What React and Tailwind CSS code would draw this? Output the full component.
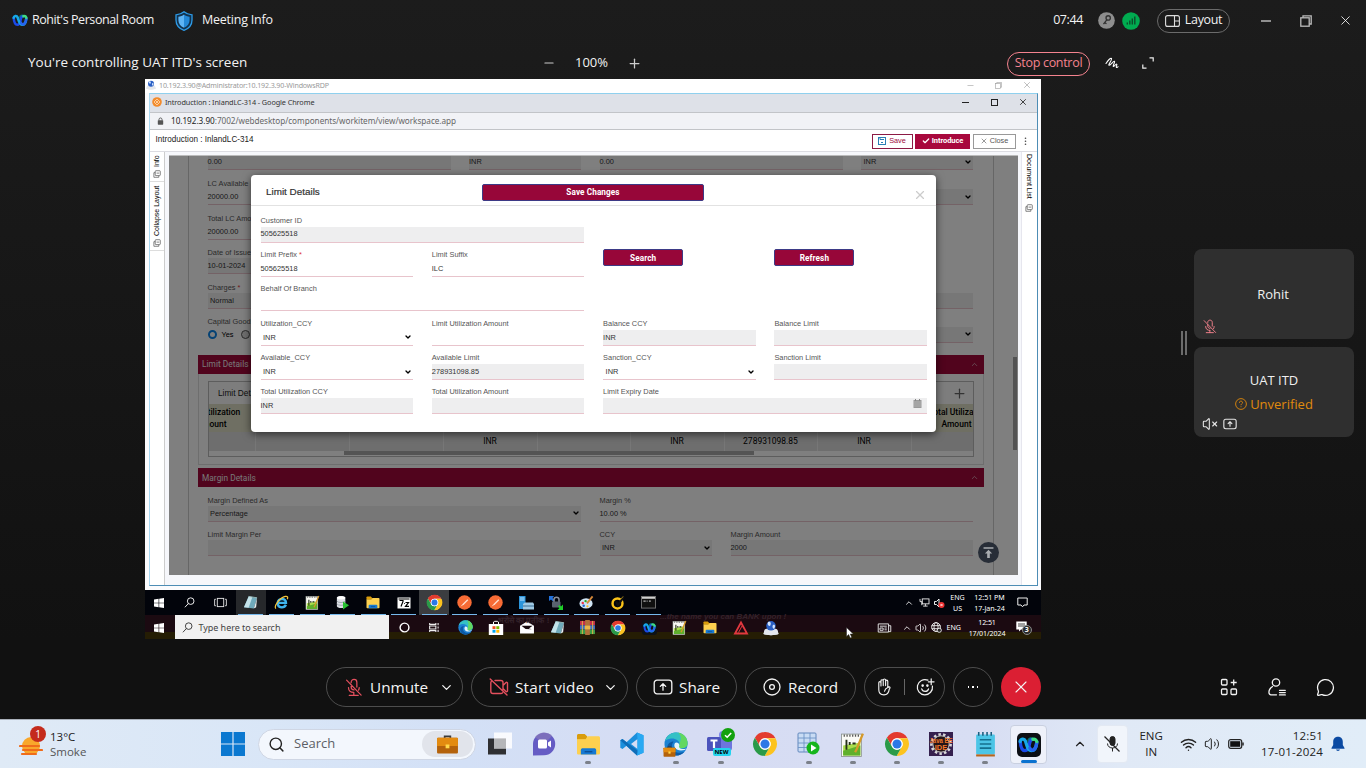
import React from "react";
import {
  Search, ChevronDown, ChevronUp, X, Minus, Plus, Check, VolumeX,
  MessageCircle, Wifi, Volume2,
} from "lucide-react";

/* ---------- logos ---------- */
const petal = "M21.7 6.8H12A5.2 5.2 0 0 0 7.5 14.6L2.65 6.2A11 11 0 0 1 21.7 6.8Z";
const ChromeLogo = ({ className }) => (
  <svg viewBox="0 0 24 24" className={className}>
    <circle cx="12" cy="12" r="10.5" fill="#fff" />
    <path d={petal} fill="#e33b2e" />
    <path d={petal} fill="#fcc31e" transform="rotate(120 12 12)" />
    <path d={petal} fill="#2a9a48" transform="rotate(240 12 12)" />
    <circle cx="12" cy="12" r="5.3" fill="#fff" />
    <circle cx="12" cy="12" r="4.2" fill="#2b78e6" />
  </svg>
);
const WebexMark = ({ className }) => (
  <svg viewBox="0 0 24 18" className={className} fill="none" strokeLinecap="round">
    <path d="M12.5 5.5C11 1 16 1 17.5 2.500" stroke="#0a7a6a" strokeWidth="3" />
    <path d="M2.500 4.500C3 12 5 15.500 8 15.500C11.500 15.500 13 9 13.500 6C14 3.500 15.500 2.500 17 2.500" stroke="#1b4bea" strokeWidth="3.800" />
    <path d="M2.500 5C3 2 7 1 8.500 4.500C10 9 11 15.500 15.500 15.500C19 15.500 21 11 21.500 6" stroke="#16a9e8" strokeWidth="3.800" />
    <path d="M13.500 12.500C17 18 21 13 21.500 5.500" stroke="#2563f0" strokeWidth="3.800" />
    <path d="M17 2.600C19 1.800 20.500 2.500 21.500 5" stroke="#3ddc84" strokeWidth="3.800" />
  </svg>
);
const WinLogo = ({ className }) => (
  <svg viewBox="0 0 10 10" className={className} fill="#fff">
    <path d="M0 1.500L4.600.8V4.700H0zM5.200.7L10 0V4.700H5.200zM0 5.300H4.600V9.200L0 8.500zM5.200 5.300H10V10L5.200 9.300z" />
  </svg>
);
const MagnifierLeft = ({ className }) => (
  <svg viewBox="0 0 12 12" className={className} fill="none" stroke="currentColor" strokeWidth="1">
    <circle cx="7.300" cy="4.500" r="3.600" /><path d="M4.800 7.100L1 11.200" />
  </svg>
);
const TaskView = ({ className }) => (
  <svg viewBox="0 0 14 12" className={className} fill="none" stroke="#e5e5e5" strokeWidth="1">
    <rect x="3.500" y="1.500" width="7" height="9" /><path d="M2 2.500H.6V9.500H2M12 2.500h1.400V9.500H12" />
  </svg>
);
const NotepadTilt = ({ className }) => (
  <svg viewBox="0 0 16 16" className={className}>
    <path d="M6 1.500L15 3L11.500 14.500L1 13Z" fill="#6fa9ba" /><path d="M6 1.500L10 2.200L6 13.700L1 13Z" fill="#c4e3ea" />
    <path d="M11.500 14.500L15 3L14 13Z" fill="#e8eef0" /><path d="M6 1.500L15 3" stroke="#9bb" />
  </svg>
);
const IeLogo = ({ className }) => (
  <svg viewBox="0 0 16 16" className={className} fill="none">
    <path d="M12.700 10.500C11 14.200 4 14.500 4 8.500C4 3 13 2.500 12.800 8.400H5" stroke="#3fb4ee" strokeWidth="2.600" />
    <path d="M2 14.500C-.5 12 6 3 12 1.500C14.500 1 15.200 2.500 14 4.500" stroke="#f5c53a" strokeWidth="1.300" />
  </svg>
);
const NotepadPlus = ({ className }) => (
  <svg viewBox="0 0 24 24" className={className}>
    <rect x="1.500" y="2" width="19" height="21.500" fill="#fafaf5" stroke="#8a928c" strokeWidth=".8" />
    <path d="M3 13L19.500 10V22.500H3Z" fill="#a9dc4c" /><path d="M3 18L19.500 13V22.500H3Z" fill="#5fb02c" />
    <path d="M3.500 3.500H18.500" stroke="#555" strokeDasharray="1.200 1.500" strokeWidth="2" />
    <path d="M6.200 7.500v9.500M9.300 9.500v3M12 11h3" stroke="#253018" strokeWidth="1.800" /><path d="M22 1.500L16 16.500l-1.500 3" stroke="#d69a2a" strokeWidth="2.200" fill="none" />
  </svg>
);
const DbPlay = ({ className }) => (
  <svg viewBox="0 0 16 16" className={className}>
    <path d="M2 3C2 .5 11 .5 11 3V12C11 14.500 2 14.500 2 12Z" fill="#dcdfe4" /><ellipse cx="6.500" cy="3" rx="4.500" ry="1.700" fill="#fff" />
    <path d="M2 6.500C3 8.500 10 8.500 11 6.500M2 9.500C3 11.500 10 11.500 11 9.500" stroke="#9aa1ab" fill="none" />
    <path d="M8.500 7L15 11L8.500 15.500Z" fill="#25c02f" />
  </svg>
);
const FolderIcon = ({ className }) => (
  <svg viewBox="0 0 24 24" className={className}>
    <path d="M0 2.500C0 1.700.7 1 1.500 1H8L10.500 3.500V7H0Z" fill="#d99c0c" />
    <path d="M0 6.500H9L11 3.500H22.500C23.300 3.500 24 4.200 24 5V21C24 21.800 23.300 22.500 22.500 22.500H1.500C.7 22.500 0 21.800 0 21Z" fill="#fdd04f" />
    <path d="M4 22.500V18C4 16.500 5 16 6 16H18C19 16 20 16.500 20 18V22.500Z" fill="#1679d3" /><path d="M8 19.500H16" stroke="#0b4f96" strokeWidth="1.500" />
  </svg>
);
const SevenZip = ({ className }) => (
  <svg viewBox="0 0 14 12" className={className}>
    <rect x=".5" y=".5" width="13" height="11" fill="#fff" /><path d="M2.500 3.500H6V4.500L4 9.500M7 6.500h.8M8.500 5.500H11.500L8.500 9.300H12M1.500 2H12.500" stroke="#000" strokeWidth="1.200" fill="none" />
  </svg>
);
const PostmanLogo = ({ className }) => (
  <svg viewBox="0 0 16 16" className={className}>
    <circle cx="8" cy="8" r="7.700" fill="#f76b35" /><path d="M3.500 12.500L6.500 9L11 4.500L12 5.500L7.500 10Z" fill="#ffe0d0" />
  </svg>
);
const ServerIcon = ({ className }) => (
  <svg viewBox="0 0 16 16" className={className}>
    <rect x="1" y="1" width="6.500" height="13" fill="#2c95db" /><path d="M2 3H6.500M2 5H6.500" stroke="#bfe4ff" />
    <path d="M5 9L7 7.500H15L16 9V14.500H5Z" fill="#9fc9e4" /><path d="M5 11H16" stroke="#3b6f94" />
  </svg>
);
const LockNet = ({ className }) => (
  <svg viewBox="0 0 16 16" className={className}>
    <path d="M1 1H6L4.500 3L6.500 5L5 6.500L3 4.500L1 6Z" fill="#2372dc" /><path d="M6 7V4.500C6 1.500 11 1.500 11 4.500V7" stroke="#8a8f99" strokeWidth="1.500" fill="none" />
    <rect x="4" y="6.500" width="8.500" height="6" rx="1" fill="#59636f" /><path d="M15 15H9.500L11.500 13L10 11.500L11.500 10L13 11.500L15 9.500Z" fill="#1fd02a" />
  </svg>
);
const PaletteIcon = ({ className }) => (
  <svg viewBox="0 0 16 16" className={className}>
    <ellipse cx="7.500" cy="9" rx="7" ry="5.500" fill="#cfe4f5" /><circle cx="4" cy="8.500" r="1.300" fill="#e34" /><circle cx="7" cy="6.500" r="1.300" fill="#2a2" />
    <circle cx="5" cy="11.500" r="1.300" fill="#26c" /><circle cx="9" cy="12" r="1.200" fill="#fb2" /><path d="M8.500 9L14.500 1.500" stroke="#d5893a" strokeWidth="2" />
  </svg>
);
const NortonRing = ({ className }) => (
  <svg viewBox="0 0 16 16" className={className} fill="none">
    <circle cx="8" cy="9" r="5.300" stroke="#fcc419" strokeWidth="2.600" /><path d="M6.500 7L8.500 11L14.500 2" stroke="#111" strokeWidth="2.400" /><path d="M11 5L14 1.500" stroke="#a8841a" />
  </svg>
);
const CmdIcon = ({ className }) => (
  <svg viewBox="0 0 16 14" className={className}>
    <rect x=".5" y=".5" width="15" height="12.500" fill="#101010" stroke="#777" /><path d="M1 2H15" stroke="#d0d0d0" strokeWidth="2" />
    <path d="M2.500 5.500H5M6 5.500h1M8.500 5.500h2" stroke="#eee" />
  </svg>
);
const EdgeLogo = ({ className }) => (
  <svg viewBox="0 0 24 24" className={className}>
    <circle cx="12" cy="12" r="11.500" fill="#1c82d3" />
    <path d="M1 9C3 2 9 .2 13 .5C20 1 24 6.500 23.500 12C23 16 18.500 17 15.500 16C14 15.500 15.500 14.500 15.500 12C15.500 8.500 11 6 7 6.500C4 7 2 8 1 9Z" fill="#35c1c5" />
    <path d="M14 .6C20 1.500 24 6.500 23.500 12C23 16 18.500 17 15.500 16C14 15.500 15.500 14.500 15.500 12C17 8 18 4 14 .6Z" fill="#62d860" />
    <path d="M8 12.500C7 18 12 22.500 20 20C16 25 8 24 5 20C1 14 5 9.500 9.500 9.500Z" fill="#0c59a4" />
    <path d="M11 11C9 14 11.500 18.500 17 18.500C20 18.500 21.500 17.500 22.500 16.500C18 18 14 16.500 15.300 13.500C15.500 11 12.500 9.500 11 11Z" fill="#e4f4fb" />
  </svg>
);
const StoreIcon = ({ className }) => (
  <svg viewBox="0 0 16 16" className={className}>
    <path d="M5.500 4V2C5.500 1 10.500 1 10.500 2V4" stroke="#fff" fill="none" /><path d="M.8 4H15.200V15H.8Z" fill="#fff" />
    <path d="M4.500 6.200H7.500V9H4.500Z" fill="#f25022" /><path d="M8.300 6.200H11.300V9H8.300Z" fill="#7fba00" /><path d="M4.500 9.800H7.500V12.700H4.500Z" fill="#00a4ef" /><path d="M8.300 9.800H11.300V12.700H8.300Z" fill="#ffb900" />
  </svg>
);
const MailIcon = ({ className }) => (
  <svg viewBox="0 0 16 14" className={className}>
    <path d="M.5 5L8 .5L15.500 5V13.500H.5Z" fill="#fff" /><path d="M2 5H14L10 8.200L13.500 9L6.500 8.500Z" fill="#180a0e" />
  </svg>
);
const BooksIcon = ({ className }) => (
  <svg viewBox="0 0 16 16" className={className}>
    <rect y="1" width="16" height="4.600" fill="#c22f4b" /><rect y="5.600" width="16" height="4.600" fill="#3d6fc4" /><rect y="10.200" width="16" height="4.800" fill="#3b9a45" />
    <path d="M5.500 0H10.500V16H5.500Z" fill="#b0713a" /><rect x="5" y="6" width="6" height="4" fill="#e8b648" /><path d="M2.500 1V15M13.500 1V15" stroke="#e8b648" />
  </svg>
);
const TriangleLogo = ({ className }) => (
  <svg viewBox="0 0 16 16" className={className} fill="none" stroke="#e2383f">
    <path d="M8 2.500L14 13.500H2Z" strokeWidth="1.800" /><path d="M5.500 12.500L9 6" strokeWidth="1" />
  </svg>
);
const RemoteGlobe = ({ className }) => (
  <svg viewBox="0 0 16 16" className={className}>
    <path d="M1.500 10C1.500 7.500 14.500 7.500 14.500 10L15.500 14C12 15.500 4 15.500 .5 14Z" fill="#e4e7ec" /><circle cx="8" cy="5.800" r="4.800" fill="#2a5fc4" /><path d="M5 2C8 1 8.500 4 7 6C5 6 4 4 5 2ZM10 5C12.500 4 12.500 7 11 9C9.500 8 9 6.500 10 5Z" fill="#cfe3ff" />
    <path d="M1.500 10.500C4 12.500 12 12.500 14.500 10.500L15.500 14C12 15.500 4 15.500 .5 14Z" fill="#e4e7ec" />
  </svg>
);
const VsCode = ({ className }) => (
  <svg viewBox="0 0 24 24" className={className}>
    <path d="M17 .5L23.500 3.300V20.700L17 23.500L6.500 13.700L2.500 17L.3 15.800V8.200L2.500 7L6.500 10.200ZM17.500 7L11 12L17.500 17Z" fill="#1c8fdc" fillRule="evenodd" />
    <path d="M17 .5L23.500 3.300V20.700L17 23.500L17.500 17V7Z" fill="#29a9f3" /><path d="M.3 8.200L2.500 7L17.500 18.500L17 23.500Z" fill="#0f6db8" />
  </svg>
);
const Briefcase = ({ className }) => (
  <svg viewBox="0 0 24 20" className={className}>
    <path d="M9 3.500V1.500H15V3.500" stroke="#3a3a3a" strokeWidth="1.800" fill="none" /><rect x="1" y="3" width="22" height="16.500" rx="1.200" fill="#b4620b" />
    <path d="M1 4.200C1 3.500 1.500 3 2.200 3H21.800C22.500 3 23 3.500 23 4.200V11.500H1Z" fill="#e38b10" /><rect x="10" y="10" width="4" height="4" fill="#ffd84a" />
  </svg>
);
const StackWindows = ({ className }) => (
  <svg viewBox="0 0 24 24" className={className}>
    <rect x="0" y="6.500" width="18" height="16" fill="#2f3033" /><rect x="6" y=".5" width="18" height="16" fill="#fff" fillOpacity=".85" /><rect x="6" y="6.500" width="12" height="10" fill="#b5b6b9" />
  </svg>
);
const ChatVideo = ({ className }) => (
  <svg viewBox="0 0 24 24" className={className}>
    <path d="M12 .8A11.200 11.200 0 1 1 12 23.200L1 23.500V12A11.200 11.200 0 0 1 12 .8Z" fill="#655cc4" /><path d="M3 5A11.200 11.200 0 0 1 20 4L12 12Z" fill="#8c7bb8" fillOpacity=".6" />
    <rect x="6" y="7.500" width="9" height="9" rx="1.500" fill="#fff" /><path d="M16 10.500L19 8.500V15.500L16 13.500Z" fill="#fff" />
  </svg>
);
const TeamsIcon = ({ className }) => (
  <svg viewBox="0 0 28 28" className={className}>
    <circle cx="16" cy="7" r="4" fill="#7b83eb" /><path d="M11 10H25V20C25 24 19 25 16 24L11 20Z" fill="#6e76dd" />
    <rect x="0" y="9" width="14" height="14" rx="1.500" fill="#4b53bc" /><path d="M3.500 12.500H10.500M7 12.500V20" stroke="#fff" strokeWidth="2.200" />
    <circle cx="21" cy="7" r="7" fill="#13a10e" /><path d="M18 7.200L20.200 9.300L24.200 5" stroke="#fff" strokeWidth="1.500" fill="none" />
  </svg>
);
const DbTable = ({ className }) => (
  <svg viewBox="0 0 24 24" className={className}>
    <rect x="1" y="1" width="18" height="19" rx="1" fill="#c9dcf4" stroke="#6288bd" /><path d="M1 6H19M1 11H19M1 15.500H19M7 1V20M13 1V20" stroke="#6d93c6" strokeWidth=".9" />
    <circle cx="16" cy="16" r="6.500" fill="#16b51c" /><path d="M14 12.500L19.500 16L14 19.500Z" fill="#fff" />
  </svg>
);
const JavaEE = ({ className }) => (
  <svg viewBox="0 0 24 24" className={className}>
    <rect width="24" height="24" fill="#35204e" /><circle cx="12" cy="12" r="9.600" fill="none" stroke="#d8d8d8" strokeWidth="2.600" strokeDasharray="2.500 2.200" /><circle cx="12" cy="12" r="8.200" fill="#241618" stroke="#c4c4c4" />
    <text x="12" y="11" textAnchor="middle" fontSize="7" fontWeight="bold" fontFamily="Liberation Sans" fill="#f2762a" textLength="23" lengthAdjust="spacingAndGlyphs">Java EE</text>
    <text x="12" y="18" textAnchor="middle" fontSize="7.500" fontWeight="bold" fontFamily="Liberation Sans" fill="#f2762a">IDE</text>
  </svg>
);
const NotepadBlue = ({ className }) => (
  <svg viewBox="0 0 24 24" className={className}>
    <rect x="3" y="2.500" width="18" height="19" rx="1" fill="#4cc5e6" /><path d="M3 22.500H21" stroke="#b8651b" strokeWidth="2" />
    <path d="M5.500 0V3.500M9.500 0V3.500M13.500 0V3.500M17.500 0V3.500" stroke="#1b5f80" strokeWidth="1.500" /><path d="M6.500 7.500H17.500M6.500 11.500H17.500M6.500 15.500H17.500" stroke="#14708f" strokeWidth="1.500" />
  </svg>
);
const ShareBox = ({ className, sw = 1.5 }) => (
  <svg viewBox="0 0 20 16" className={className} fill="none" stroke="currentColor" strokeWidth={sw} strokeLinecap="round" strokeLinejoin="round">
    <rect x="1.200" y="1.200" width="17.600" height="13.600" rx="2.800" /><path d="M10 11.200V5M7.300 7.400L10 4.800L12.700 7.400" />
  </svg>
);
const MicMuted = ({ className, sw = 1.3 }) => (
  <svg viewBox="0 0 18 20" className={className} fill="none" stroke="currentColor" strokeWidth={sw} strokeLinecap="round">
    <path d="M6 5V4.500C6 .5 12 .5 12 4.500V9.500M6 7V9.500C6 11 7 12.500 9 12.500M3.200 10C3.200 13.500 5.500 15.200 8.800 15.200M14.500 10C14.500 11 14.300 12 13.800 12.800M8.800 15.200V18.200M4 18.200H13.500M1.200 2.200L16.500 18" />
  </svg>
);
const CamMuted = ({ className }) => (
  <svg viewBox="0 0 20 18" className={className} fill="none" stroke="currentColor" strokeWidth="1.400" strokeLinecap="round" strokeLinejoin="round">
    <path d="M6 2.500H11.800C13 2.500 14 3.500 14 4.500V11.500M2.800 3C2 3.500 1.800 4 1.800 4.800V13.200C1.800 14.500 2.800 15.500 4 15.500H11.800C12.500 15.500 13.200 15.200 13.500 14.800M14 7.500L17 4.500C17.500 4 18.500 4.300 18.500 5V13C18.500 13.700 17.500 14 17 13.500L14 10.500M1.200 1L18 17" />
  </svg>
);
const SheetIcon = ({ className }) => (
  <svg viewBox="0 0 9 9" className={className} fill="none" stroke="#555" strokeWidth=".8">
    <rect x="2.500" y=".8" width="5.700" height="5.500" rx=".8" /><path d="M2.500 3H1V8.200H6.500V6.500M4 3.500H7" />
  </svg>
);
const RestoreIcon = ({ className, sw = 1 }) => (
  <svg viewBox="0 0 12 12" className={className} fill="none" stroke="currentColor" strokeWidth={sw}>
    <rect x=".8" y="2.800" width="8.400" height="8.400" /><path d="M3 2.800V.8H11.200V9H9.200" />
  </svg>
);

/* ---------- meeting header ---------- */
function TopBar() {
  return (
    <header className="flex h-[40px] items-center pl-[12px] pr-[13px] pt-px text-[12.500px] font-medium text-[#f2f2f2]">
      <WebexMark className="h-[13px] w-[16px]" />
      <span className="ml-[4px] w-[143px] tracking-[-0.430px]">Rohit's Personal Room</span>
      <svg viewBox="0 0 18 20" className="h-[20px] w-[18px]">
        <path d="M9 .8C11.500 3 14 3.600 17 3.800V9C17 14.500 13.500 17.700 9 19.300C4.500 17.700 1 14.500 1 9V3.800C4 3.600 6.500 3 9 .8Z" fill="#12324d" stroke="#2d9be8" strokeWidth="1.300" />
        <path d="M9 3.500V16.700C5.500 15.300 3.400 12.800 3.400 9V5.700C5.500 5.500 7.300 4.900 9 3.500Z" fill="#5db4f5" /><path d="M9 3.500V16.700C12.500 15.300 14.600 12.800 14.600 9V5.700C12.500 5.500 10.700 4.900 9 3.500Z" fill="#2489d8" />
      </svg>
      <span className="ml-[9px] tracking-[-0.220px]">Meeting Info</span>
      <div className="ml-auto flex items-center">
        <span className="mr-[15px] tracking-[-0.400px]">07:44</span>
        <svg viewBox="0 0 18 18" className="mr-[7px] size-[17px]"><circle cx="9" cy="9" r="8.800" fill="#8e8e8e" /><circle cx="10.800" cy="6.300" r="2.300" fill="none" stroke="#333" strokeWidth="1.400" /><path d="M9.500 8L5.800 12.800M7 11.300L9 12.500" stroke="#333" strokeWidth="1.400" /></svg>
        <svg viewBox="0 0 18 18" className="mr-[17px] size-[18px]"><circle cx="9" cy="9" r="8.800" fill="#00ab50" /><path d="M5.300 12.500V10.500M7.800 12.500V8.500M10.300 12.500V6.500M12.800 12.500V4.500" stroke="#0b4d2a" strokeWidth="1.400" /></svg>
        <button className="flex h-[24px] w-[73px] items-center justify-center gap-[5px] rounded-full border border-[#6b6b6b] tracking-[-0.350px]">
          <svg viewBox="0 0 15 12" className="h-[12px] w-[15px]" fill="none" stroke="#ddd" strokeWidth="1.100"><rect x=".6" y=".6" width="13.800" height="10.800" rx="2" /><path d="M9.500 .6V11.400M9.500 6H14.400" /></svg>
          Layout
        </button>
        <span className="ml-[31px] mr-[29px] h-[2px] w-[10px] bg-[#8f8f8f]" />
        <RestoreIcon className="size-[12px] text-[#bbb]" sw={1.300} />
        <X className="ml-[26px] size-[15px] text-white" strokeWidth={1.300} />
      </div>
    </header>
  );
}
function ControlStrip() {
  return (
    <div className="flex h-[39px] items-center pl-[28px] pt-[7px] font-medium text-[#f2f2f2]">
      <span className="w-[514px] pb-[2px] text-[13.500px]">You're controlling UAT ITD's screen</span>
      <Minus className="size-[14px] text-[#ccc]" strokeWidth={2} />
      <span className="w-[71px] text-center text-[13px]">100%</span>
      <Plus className="size-[15px] text-[#ccc]" strokeWidth={2} />
      <button className="ml-[365px] mt-px h-[24px] w-[83px] rounded-full border border-[#f5838f] pb-px text-[12.500px] tracking-[-0.300px] text-[#f5838f]">Stop control</button>
      <svg viewBox="0 0 14 12" className="ml-[15px] h-[12px] w-[14px]" fill="none" stroke="#fff" strokeWidth="1.100" strokeLinecap="round" strokeLinejoin="round"><path d="M1 6.500C3 3.500 5.500 1 6.500 1.500C7.500 2.300 3 8 4 8.300C5.200 8.600 8.500 3.500 9.500 4.300C10.300 5 7.500 9 8.300 9.500C9 10 11 6.500 11.800 7.300C12.300 8 10.500 10 11.500 10.500C12 10.700 12.800 10 13 9.700" /></svg>
      <svg viewBox="0 0 12 12" className="ml-[23px] size-[12px]" fill="none" stroke="#eee" strokeWidth="1.200"><path d="M7.500 .8H11.200V4.500M4.500 11.200H.8V7.500" /></svg>
    </div>
  );
}

/* ---------- form pieces ---------- */
const tones = { grey: "bg-[#eeeeef]", plain: "bg-transparent" };
function Field({ label, value, star, select, tone = "grey", className = "", children }) {
  return (
    <div className={`h-[34.4px] ${className}`}>
      <div className="field-label h-[12px] pt-[2px] leading-[9px] text-[#555]">
        {label}{star && <span className="text-[#d33]"> *</span>}
      </div>
      <div className={`flex h-[16px] items-center justify-between border-b border-[#e8c4cc] text-[#333] ${tones[tone]} ${select ? "pl-[2.500px]" : ""}`}>
        <span>{value}</span>
        {select && <ChevronDown className="mr-[1px] size-[8px] text-black" strokeWidth={4} />}
        {children}
      </div>
    </div>
  );
}
function SectionBar({ title }) {
  return (
    <div className="mx-[9px] flex h-[19px] items-center justify-between bg-[#a3083b] px-[4px] font-['Roboto'] text-[8.300px] tracking-[0.050px] text-[#eee]">
      {title}
      <ChevronUp className="mr-[1px] size-[9px]" strokeWidth={1.500} />
    </div>
  );
}
const cell = "flex h-full items-center justify-center border-r border-[#eee] pb-[2px]";
function BackgroundForm() {
  return (
    <div className="ml-[19.500px] flow-root h-full w-[805.500px] border-x border-[#ccc] text-[7.400px]">
      <div className="-mt-[14px] grid grid-cols-[243px_112px_243px_112px] gap-x-[18.500px] px-[18.500px]">
        <Field label="" value="0.00" /><Field label="" value="INR" /><Field label="" value="0.00" /><Field label="" value="INR" select />
      </div>
      <div className="mt-[1px] grid grid-cols-[373px_373px] gap-x-[19px] px-[18.500px]">
        <Field label="LC Available" value="20000.00" tone="plain" /><Field label="" value="" select />
      </div>
      <div className="px-[18.500px]"><Field label="Total LC Amount" value="20000.00" tone="plain" className="w-[373px]" /></div>
      <div className="px-[18.500px]"><Field label="Date of Issue" value="10-01-2024" className="w-[373px]" /></div>
      <div className="grid grid-cols-[373px_373px] gap-x-[19px] px-[18.500px]">
        <Field label="Charges" star value="Normal" select /><Field label="" value="" />
      </div>
      <div className="grid h-[40px] grid-cols-[373px_373px] gap-x-[19px] px-[18.500px]">
        <div className="pt-[2px] leading-[9px] text-[#555]">
          Capital Goods
          <div className="mt-[3px] flex h-[12px] items-center">
            <i className="size-[9px] rounded-full border-[2.500px] border-[#0a84e8] bg-white" />
            <span className="ml-[5px] mr-[7px] text-black">Yes</span>
            <i className="size-[9px] rounded-full border border-[#555] bg-[#ddd]" />
          </div>
        </div>
        <Field label="" value="" select />
      </div>
      <SectionBar title="Limit Details" />
      <div className="mx-[9px] h-[91px] border border-t-0 border-[#ddd] px-[9px] pt-[7px]">
        <div className="h-[76px] overflow-hidden border border-[#bbb]">
          <div className="flex h-[22.500px] items-center justify-between bg-[#fbfbfb] pl-[9px] pr-[6px] text-[8.300px] text-[#222]">
            Limit Details <Plus className="size-[15px] text-[#666]" strokeWidth={2} />
          </div>
          <div className="flex h-[28px] items-center justify-between bg-[#dedec6] pb-px font-['Roboto'] text-[8.500px] font-medium leading-[12px] text-black">
            <div className="-ml-[7px]">Utilization<br />mount</div>
            <div className="-mr-[6px] text-right">Total Utilizati<br /><span className="mr-[7px]">Amount</span></div>
          </div>
          <div className="grid h-[19px] grid-cols-[47px_94px_93.500px_94px_93px_94px_93px_94px_63px] items-center bg-[#ddd] text-center font-['Roboto'] text-[8.500px] text-black">
            <span className={cell} /><span className={cell} /><span className={cell} />
            <span className={cell}>INR</span><span className={cell} />
            <span className={cell}>INR</span><span className={cell}>278931098.85</span><span className={cell}>INR</span><span />
          </div>
          <div className="h-[5px] bg-white"><div className="ml-[134.500px] h-[4px] w-[410px] bg-[#a8a8a8]" /></div>
        </div>
      </div>
      <div className="h-[3.500px]" />
      <SectionBar title="Margin Details" />
      <div className="mt-[6.500px] grid grid-cols-[373px_373px] gap-x-[19px] px-[18.500px]">
        <Field label="Margin Defined As" value="Percentage" select /><Field label="Margin %" value="10.00 %" tone="plain" />
      </div>
      <div className="grid grid-cols-[373px_112px_242px] gap-x-[19px] px-[18.500px]">
        <Field label="Limit Margin Per" value="" /><Field label="CCY" value="INR" select /><Field label="Margin Amount" value="2000" />
      </div>
    </div>
  );
}
const ModalButton = ({ children, className }) => (
  <button className={`h-[16.500px] rounded-[2px] border border-[#3d3a86] bg-[#970639] font-['Roboto'] text-[8.200px] font-bold leading-none tracking-[0.100px] text-white ${className}`}>{children}</button>
);
function LimitModal() {
  return (
    <div className="absolute left-[82.500px] top-[18.500px] h-[257px] w-[685px] rounded-[4px] bg-white text-[7.400px] shadow-[0_2px_8px_rgba(0,0,0,0.600)]">
      <div className="flex h-[31px] items-start border-b border-[#e2e2e2] pl-[15px] pr-[9px]">
        <h2 className="w-[216px] pt-[12px] text-[9.900px] leading-none text-[#333] [-webkit-text-stroke:0.200px_#333]">Limit Details</h2>
        <ModalButton className="mt-[9.500px] w-[222px]">Save Changes</ModalButton>
        <X className="ml-auto mt-[13px] size-[14px] text-[#ccc]" strokeWidth={2} />
      </div>
      <div className="grid grid-cols-[152.500px_152.500px_152.500px_152.500px] gap-x-[18.800px] pl-[9.500px] pt-[9px] [&_.field-label]:pt-[1px]">
        <Field label="Customer ID" value="505625518" className="col-span-2" /><span className="col-span-2" />
        <Field label="Limit Prefix" star value="505625518" tone="plain" /><Field label="Limit Suffix" value="ILC" tone="plain" />
        <ModalButton className="mt-[0.500px] w-[80px]">Search</ModalButton><ModalButton className="mt-[0.500px] w-[80px]">Refresh</ModalButton>
        <Field label="Behalf Of Branch" value="" tone="plain" className="col-span-2" /><span className="col-span-2" />
        <Field label="Utilization_CCY" value="INR" select tone="plain" /><Field label="Limit Utilization Amount" value="" tone="plain" /><Field label="Balance CCY" value="INR" /><Field label="Balance Limit" value="" />
        <Field label="Available_CCY" value="INR" select tone="plain" /><Field label="Available Limit" value="278931098.85" /><Field label="Sanction_CCY" value="INR" select tone="plain" /><Field label="Sanction Limit" value="" />
        <Field label="Total Utilization CCY" value="INR" /><Field label="Total Utilization Amount" value="" />
        <Field label="Limit Expiry Date" value="" className="col-span-2">
          <svg viewBox="0 0 9 9" className="mb-[4px] mr-[5px] size-[9px]"><path d="M.5 1H8.500V9H.5Z" fill="#9a9a9a" /><path d="M.5 3H8.500M.5 5H8.500M.5 7H8.500" stroke="#c4c4c4" strokeWidth=".5" /><path d="M2.500 0V2M6.500 0V2" stroke="#888" /></svg>
        </Field>
      </div>
    </div>
  );
}

/* ---------- remote desktop ---------- */
const remoteTop = [
  [WinLogo, "size-[10px]", ""], [MagnifierLeft, "size-[11px] text-white", ""], [TaskView, "h-[11px] w-[13px]", ""],
  [NotepadTilt, "size-[15px]", "bg-[#26282b]", 1], [IeLogo, "size-[15px]", "", 1], [NotepadPlus, "size-[15px]", "", 1], [DbPlay, "size-[15px]", "", 1],
  [FolderIcon, "h-[13px] w-[14px]", "", 1], [SevenZip, "h-[12px] w-[14px]", "", 1], [ChromeLogo, "size-[17px]", "bg-[#3b3d40]", 1],
  [PostmanLogo, "size-[15px]", "", 1], [PostmanLogo, "size-[15px]", "", 1], [ServerIcon, "size-[16px]", "", 1], [LockNet, "size-[16px]", "", 1],
  [PaletteIcon, "size-[15px]", "", 1], [NortonRing, "size-[15px]", "", 1], [CmdIcon, "h-[13px] w-[15px]", "", 1],
];
const Cortana = ({ className }) => <svg viewBox="0 0 10 10" className={className} fill="none" stroke="#fff" strokeWidth="1.300"><circle cx="5" cy="5" r="4" /></svg>;
const TimelineIcon = ({ className }) => <svg viewBox="0 0 12 10" className={className} fill="none" stroke="#eee" strokeWidth="1.200"><path d="M.6 0V1.500H7.500V0M.6 10V8.500H7.500V10M.6 3.300H7.500V6.700H.6ZM10 0V2.500M10 4V6M10 7.500V10" /></svg>;
const WebexSmall = ({ className }) => <span className={`flex items-center justify-center rounded-[3px] bg-[#0e1216] ${className}`}><WebexMark className="h-[10px] w-[13px]" /></span>;
const remoteBottom = [
  [Cortana, "size-[11px]"], [TimelineIcon, "h-[9px] w-[11px]"], [EdgeLogo, "size-[15px]"], [StoreIcon, "size-[16px]"], [MailIcon, "h-[13px] w-[16px]"], [NotepadTilt, "size-[15px]"],
  [BooksIcon, "size-[15px]"], [ChromeLogo, "size-[16px]"], [WebexSmall, "size-[15px]"], [NotepadPlus, "size-[15px]"], [FolderIcon, "h-[13px] w-[14px]"], [TriangleLogo, "size-[16px]"], [RemoteGlobe, "size-[16px]"],
];
function RemoteTaskbars() {
  return (
    <>
      <div className="flex h-[25px] bg-[#02040b] pr-[13px] text-[#eee]">
        {remoteTop.map(([Icon, cls, bg, open], i) => (
          <div key={i} className={`flex h-[25px] w-[30.550px] shrink-0 flex-col items-center ${i === 0 ? "-ml-px" : ""} ${bg}`}>
            <div className="flex h-[24px] items-center pt-px"><Icon className={cls} /></div>
            {open && <div className="h-[1px] w-[25px] bg-[#76b9ed]" />}
          </div>
        ))}
        <div className="ml-auto flex items-center font-['Noto_Sans'] text-[7.100px] leading-[10.500px] text-white">
          <ChevronUp className="size-[10px]" strokeWidth={2} />
          <svg viewBox="0 0 11 10" className="ml-[5px] h-[9px] w-[11px]" fill="none" stroke="#eee"><rect x="3" y="1" width="7.500" height="5.500" /><path d="M6.500 6.500V9M4 9H9M.5 1V4H2.500V8" /></svg>
          <svg viewBox="0 0 11 10" className="ml-[4px] h-[10px] w-[11px]"><path d="M.5 3.500H2.500L5 1V9L2.500 6.500H.5Z" fill="none" stroke="#eee" /><circle cx="7.500" cy="7" r="3" fill="#e33" /><path d="M6.500 6L8.500 8M8.500 6L6.500 8" stroke="#fff" strokeWidth=".8" /></svg>
          <div className="ml-[4px] w-[17px] text-center">ENG<br />US</div>
          <div className="ml-[6px] w-[35px] text-center tracking-[-0.050px]">12:51 PM<br />17-Jan-24</div>
          <svg viewBox="0 0 11 11" className="ml-[10px] size-[11px]" fill="none" stroke="#eee"><path d="M.8 1H10.200V8H7L5.500 9.800L4 8H.8Z" /></svg>
        </div>
      </div>
      <div className="relative flex h-[25px] bg-[linear-gradient(#1b0a11_0_17px,#251d04_17px)] pr-[8px] text-[#eee]">
        <span className="absolute left-[353px] top-[0px] text-[8px] font-bold text-[#33222a]">भरोसे का प्रतीक !</span>
        <span className="absolute left-[515px] top-[-4px] whitespace-nowrap text-[8px] font-bold italic text-[#35232b]">...the name you can BANK upon !</span>
        <div className="flex w-[29.500px] items-center justify-center pr-px pt-px"><WinLogo className="size-[10px]" /></div>
        <div className="flex h-[24px] w-[214.500px] items-center bg-[#f1f1f1] pl-[7px] pt-px font-['Noto_Sans'] text-[9px] tracking-[-0.050px] text-[#444]">
          <MagnifierLeft className="mr-[6px] size-[11px] text-[#333]" />Type here to search
        </div>
        {remoteBottom.map(([Icon, cls], i) => (
          <div key={i} className="flex h-[25px] w-[30.600px] shrink-0 items-center justify-center"><Icon className={cls} /></div>
        ))}
        <div className="ml-auto flex items-center font-['Noto_Sans'] text-[7.100px] leading-[10.500px] text-white">
          <svg viewBox="0 0 15 11" className="h-[10px] w-[15px]" fill="none" stroke="#eee"><path d="M.6 1H12V10H.6ZM12 3H14.400V9.500H12M2.500 3.500H10M2.500 5.500H6V8H2.500ZM7.500 5.500H10M7.500 7.500H10" /></svg>
          <ChevronUp className="ml-[10px] size-[10px]" strokeWidth={2} />
          <Volume2 className="ml-[3px] size-[12px]" strokeWidth={1.600} />
          <svg viewBox="0 0 12 12" className="ml-[4px] size-[11px]" fill="none" stroke="#eee"><circle cx="5.500" cy="5.500" r="4.800" /><ellipse cx="5.500" cy="5.500" rx="2.200" ry="4.800" /><path d="M.7 4H10.300M.7 7.300H10.300" /><circle cx="9" cy="9" r="2.300" fill="#222" /></svg>
          <span className="ml-[5px]">ENG</span>
          <div className="ml-[7px] w-[38px] text-center tracking-[-0.100px]">12:51<br />17/01/2024</div>
          <span className="relative ml-[10px] block h-[13px] w-[17px]">
            <svg viewBox="0 0 11 11" className="size-[11px]"><path d="M.3 .5H10.700V8.500H5L3 10.500V8.500H.3Z" fill="#fff" /><path d="M2 3H9M2 5H9" stroke="#444" /></svg>
            <b className="absolute left-[6px] top-[4px] flex size-[9.500px] items-center justify-center rounded-full border border-[#888] bg-[#2b2b2b] text-[7px]">3</b>
          </span>
        </div>
        <svg viewBox="0 0 8 12" className="absolute left-[701px] top-[12px] h-[12px] w-[8px]"><path d="M.5 .5V9.500L2.700 7.500L4.200 11L5.700 10.300L4.300 7H7.300Z" fill="#fff" stroke="#222" strokeWidth=".5" /></svg>
      </div>
    </>
  );
}
function RemoteScreen() {
  return (
    <main className="flex h-[560px] w-[896px] flex-col overflow-hidden bg-[#fbfbfd] font-['Liberation_Sans']">
      <div className="flex h-[14px] shrink-0 items-center bg-white pb-[1.500px] pl-[1px] pr-[9.500px] font-['Noto_Sans'] text-[7.100px] tracking-[-0.150px] text-[#999]">
        <RemoteGlobe className="mr-[3px] size-[10px]" />10.192.3.90@Administrator:10.192.3.90-WindowsRDP
        <Minus className="ml-auto size-[9px]" strokeWidth={1.500} /><RestoreIcon className="ml-[20px] size-[7px]" /><X className="ml-[20px] size-[10px]" strokeWidth={1.500} />
      </div>
      <section className="ml-[4px] mr-[3px] flex h-[493px] shrink-0 flex-col border border-[#4d8db5] border-l-[#a9d8f0] border-t-[#8fd0ee] bg-white">
        <div className="flex h-[18px] shrink-0 items-center bg-[#dee1e8] pb-[1.500px] pl-[2px] pr-[9px] font-['Noto_Sans'] text-[7.300px] tracking-[-0.100px] text-[#333]">
          <svg viewBox="0 0 10 10" className="mr-[3px] size-[10px]"><circle cx="5" cy="5" r="4.800" fill="#f38b2c" /><path d="M2 5L5 2L8 5L5 8ZM3.500 3.500L6.500 6.500M6.500 3.500L3.500 6.500" stroke="#ffd9b0" strokeWidth=".8" fill="none" /></svg>
          Introduction : InlandLC-314 - Google Chrome
          <span className="ml-auto h-px w-[7px] bg-[#222]" /><span className="ml-[22px] size-[7px] border border-[#222]" /><X className="ml-[20px] size-[10px] text-[#222]" strokeWidth={2} />
        </div>
        <div className="flex h-[18px] shrink-0 items-center border-y border-[#c2c4c8] bg-[#f1f2f6] pl-[7px] font-['Noto_Sans'] text-[8.200px] tracking-[-0.030px] text-[#666]">
          <svg viewBox="0 0 7 8" className="mr-[7px] h-[8px] w-[7px]"><rect x=".8" y="3.200" width="5.400" height="4.500" rx=".6" fill="#555" /><path d="M2 3.500V2.300C2 .5 5 .5 5 2.300V3.500" stroke="#555" strokeWidth=".9" fill="none" /></svg>
          <span className="text-[#222]">10.192.3.90</span>:7002/webdesktop/components/workitem/view/workspace.app
        </div>
        <div className="flex h-[22px] shrink-0 items-center border-b border-[#dcdce2] pl-[5.500px] pr-[10px] text-[8.150px] text-[#222]">
          Introduction : InlandLC-314
          <div className="ml-auto flex items-center gap-[2.500px] pt-px text-[7.300px]">
            <button className="flex h-[15px] w-[41px] items-center justify-center gap-[3px] border border-[#8c1a45] font-medium text-[#a00c40]">
              <svg viewBox="0 0 8 8" className="size-[8px]" fill="none" stroke="#2a7fb5"><rect x=".5" y=".5" width="7" height="7" /><path d="M2 .5V2.500H6M3 5.500H5" /></svg>Save
            </button>
            <button className="flex h-[15px] w-[55px] items-center justify-center gap-[2px] bg-[#a8083d] font-['Roboto'] text-[7.500px] font-bold tracking-[-0.050px] text-white"><Check className="size-[8px]" strokeWidth={4} />Introduce</button>
            <button className="flex h-[15px] w-[43px] items-center justify-center gap-[2px] border border-[#999] text-[#555]"><X className="size-[8px]" strokeWidth={1.800} />Close</button>
            <svg viewBox="0 0 3 9" className="ml-[6px] h-[9px] w-[3px]" fill="#444"><circle cx="1.500" cy="1.200" r=".8" /><circle cx="1.500" cy="4.200" r=".8" /><circle cx="1.500" cy="7.200" r=".8" /></svg>
          </div>
        </div>
        <div className="flex min-h-0 flex-1 bg-[#f6f7fb]">
          <aside className="flex w-[15px] flex-col items-center border-r border-[#ccc] bg-white text-[7px] text-black">
            <span className="h-[15px] rotate-180 [writing-mode:vertical-rl]">Info</span>
            <SheetIcon className="mt-[3px] size-[8px]" />
            <span className="mt-[3px] h-px w-full bg-[#ddd]" />
            <span className="mt-[4px] h-[50px] rotate-180 [writing-mode:vertical-rl]">Collapse Layout</span>
            <SheetIcon className="mt-[3px] size-[8px]" />
            <span className="mt-[3px] h-px w-full bg-[#ddd]" />
          </aside>
          <div className="relative ml-[3.500px] mt-[3px] h-[419.500px] w-[849.500px] overflow-hidden border-t border-[#bbb] bg-white">
            <BackgroundForm />
            <div className="absolute right-px top-[201px] h-[93px] w-[4px] bg-[#a6a6a6]" />
            <div className="absolute inset-0 bg-black/50" />
            <LimitModal />
            <div className="absolute left-[809px] top-[385.500px] flex size-[21px] items-center justify-center rounded-full bg-[#272d37]">
              <svg viewBox="0 0 10 10" className="size-[11px]"><path d="M.5 .3H9.500V1.600H.5ZM5 2.500L8.300 6H6.200V10H3.800V6H1.700Z" fill="#a9acb0" /></svg>
            </div>
          </div>
          <aside className="ml-auto flex w-[16px] flex-col items-center border-l border-[#e6e6ee] bg-white pr-[2px] text-[7px] text-black">
            <span className="mt-[2px] h-[45px] [writing-mode:vertical-rl]">Document List</span>
            <SheetIcon className="mt-[5px] size-[8px]" />
          </aside>
        </div>
      </section>
      <div className="h-[4px] shrink-0" />
      <RemoteTaskbars />
    </main>
  );
}

/* ---------- participants ---------- */
function Participants() {
  return (
    <div className="flex items-center self-start pt-[170px]">
      <div className="mr-[7px] flex h-[24px] gap-[2px]"><i className="w-[2px] bg-[#6c6c6c]" /><i className="w-[2px] bg-[#6c6c6c]" /></div>
      <div className="flex flex-col gap-[8px] text-[13px] text-[#f0f0f0]">
        <div className="relative flex h-[90px] w-[160px] items-center justify-center rounded-[8px] bg-[#2f2f2f] pr-[2px] pt-[2px]">
          Rohit
          <MicMuted className="absolute bottom-[5px] left-[9px] h-[15px] w-[14px] text-[#f0808a]" />
        </div>
        <div className="relative flex h-[90px] w-[160px] flex-col items-center rounded-[8px] bg-[#2f2f2f] pt-[21px]">
          <span className="leading-[24px]">UAT ITD</span>
          <span className="flex items-center gap-[3px] leading-[24px] text-[#e08a0c]">
            <svg viewBox="0 0 12 12" className="size-[12px]" fill="none" stroke="#e08a0c" strokeWidth=".9"><circle cx="6" cy="6" r="5.400" /><path d="M4.400 4.800C4.400 2.500 7.700 2.700 7.500 4.800C7.400 5.800 6 6 6 7.200M6 8.300V9.200" /></svg>
            Unverified
          </span>
          <div className="absolute bottom-[5px] left-[8px] flex items-center gap-[5px] text-[#e6e6e6]">
            <VolumeX className="size-[16px]" strokeWidth={1.600} /><ShareBox className="h-[12px] w-[14px]" sw={1.600} />
          </div>
        </div>
      </div>
    </div>
  );
}

/* ---------- call controls ---------- */
const pill = "flex h-[40px] items-center rounded-full border border-[#4d4d4d]";
function CallControls() {
  return (
    <div className="flex h-[80px] items-center gap-[8px] bg-[#111] pb-[12px] pl-[326px] pr-[31px] pt-[28px] text-[15.300px] font-medium text-[#f5f5f5]">
      <button className={`${pill} w-[137px] pl-[18px]`}><MicMuted className="h-[19px] w-[18px] text-[#e5505e]" /><span className="ml-[7px] w-[69px] pt-px text-left">Unmute</span><ChevronDown className="size-[15px]" strokeWidth={2} /></button>
      <button className={`${pill} w-[157px] pl-[17px]`}><CamMuted className="h-[18px] w-[20px] text-[#e5505e]" /><span className="ml-[6px] w-[88px] pt-px text-left tracking-[0.200px]">Start video</span><ChevronDown className="size-[15px]" strokeWidth={2} /></button>
      <button className={`${pill} w-[101px] pl-[16px]`}><ShareBox className="h-[16px] w-[20px]" sw={1.300} /><span className="ml-[6px] pt-px">Share</span></button>
      <button className={`${pill} w-[111px] pl-[17px]`}><svg viewBox="0 0 18 18" className="size-[18px]" fill="none" stroke="#f2f2f2" strokeWidth="1.300"><circle cx="9" cy="9" r="8" /><circle cx="9" cy="9" r="2.400" /></svg><span className="ml-[7px] pt-px">Record</span></button>
      <div className={`${pill} w-[81px] pl-[12px]`}>
        <svg viewBox="0 0 14 19" className="h-[18px] w-[14px]" fill="none" stroke="#f2f2f2" strokeWidth="1.200" strokeLinecap="round" strokeLinejoin="round"><path d="M1.500 12.500V5C1.500 3.500 3.800 3.500 3.800 5V8.500M3.800 8V3C3.800 1.500 6.200 1.500 6.200 3V8M6.200 7.500V2.200C6.200 .6 8.700 .6 8.700 2.200V8M8.700 7.500V3.300C8.700 1.900 11 1.900 11 3.300V10C13.500 8.500 14 10 12.500 12C12 16 10.500 17.800 7 17.800C3.500 17.800 1.500 15.500 1.500 12.500M11 10C9.500 10.500 8 12 7.500 14" /></svg>
        <span className="mx-[13px] h-[16px] w-px bg-[#666]" />
        <svg viewBox="0 0 20 20" className="-ml-[2px] size-[19px]" fill="none" stroke="#f2f2f2" strokeWidth="1.300" strokeLinecap="round"><path d="M12.500 2.300A8 8 0 1 0 17.300 8.500M6 11.500C7 15 12 15 13.200 11.500M16 1V7M13 4H19" /><circle cx="7" cy="8" r=".7" fill="#fff" /><circle cx="12" cy="8" r=".7" fill="#fff" /></svg>
      </div>
      <button className={`${pill} w-[40px] justify-center gap-[3px]`}><i className="size-[1.500px] bg-white" /><i className="size-[1.500px] bg-white" /><i className="size-[1.500px] bg-white" /></button>
      <button className="flex size-[40px] items-center justify-center rounded-full bg-[#db1f33]"><X className="size-[20px]" strokeWidth={1.300} /></button>
      <div className="ml-auto flex items-center gap-[30px]">
        <svg viewBox="0 0 18 18" className="size-[18px]" fill="none" stroke="#f2f2f2" strokeWidth="1.300"><rect x="1.500" y="1.500" width="5.500" height="5.500" rx="1" /><rect x="1.500" y="11" width="5.500" height="5.500" rx="1" /><rect x="11" y="11" width="5.500" height="5.500" rx="1" /><path d="M13.700 1.500V7.500M10.700 4.500H16.700" /></svg>
        <svg viewBox="0 0 18 18" className="size-[18px]" fill="none" stroke="#f2f2f2" strokeWidth="1.300" strokeLinecap="round"><circle cx="8" cy="4.500" r="3.700" /><path d="M4.500 8.500C-.5 12 .5 16.800 3 16.800H8.500M11.500 12.300H17.300M11.500 14.600H17.300M11.500 16.900H17.300" /></svg>
        <MessageCircle className="size-[19px]" strokeWidth={1.600} />
      </div>
    </div>
  );
}

/* ---------- Windows taskbar ---------- */
const EdgeWork = ({ className }) => <span className={`relative block ${className}`}><EdgeLogo className="size-full" /><Briefcase className="absolute bottom-[-1px] left-[-1px] h-[11px] w-[13px]" /></span>;
const TeamsNew = ({ className }) => <span className={`relative block ${className}`}><TeamsIcon className="size-full" /><b className="absolute bottom-0 left-[6px] flex h-[8px] w-[18px] items-center justify-center rounded-[2px] bg-[#23d3ee] text-[6px] leading-none text-black">NEW</b></span>;
const WebexApp = ({ className }) => <span className={`flex items-center justify-center rounded-[5px] bg-[#0c0f14] ${className}`}><WebexMark className="h-[16px] w-[21px]" /></span>;
const apps = [
  [StackWindows, "size-[24px]"], [ChatVideo, "size-[24px]"], [FolderIcon, "h-[23px] w-[25px]", 1], [VsCode, "size-[24px]"], [EdgeWork, "size-[24px]", 1],
  [TeamsNew, "-mt-[4px] size-[28px]", 1], [ChromeLogo, "size-[26px]"], [DbTable, "size-[24px]", 1], [NotepadPlus, "size-[25px]", 1], [ChromeLogo, "size-[26px]", 1],
  [JavaEE, "size-[24px]", 1], [NotepadBlue, "size-[25px]", 1],
];
function WindowsTaskbar() {
  return (
    <footer className="flex h-[49px] items-center border-t border-[#aab0ba] bg-[linear-gradient(90deg,#dfeaf6_0%,#d9e6f7_20%,#d3e0f6_34%,#d6dcf3_50%,#d8def3_72%,#e0e9f6_82%,#e1edf8_100%)] text-[11.500px] text-[#222]">
      <div className="relative ml-[19px] h-[30px] w-[28px] shrink-0">
        <svg viewBox="0 0 24 24" className="absolute bottom-[1px] left-0 size-[24px]"><circle cx="12" cy="12" r="9" fill="#f9a72b" /><path d="M1 12H20M4 16H23M3 20H17" stroke="#ef6c1a" strokeWidth="2.200" strokeLinecap="round" /></svg>
        <b className="absolute left-[11px] top-[-3px] flex size-[16px] items-center justify-center rounded-full bg-[#c42b1c] text-[10px] font-normal text-white">1</b>
      </div>
      <div className="w-[174px] shrink-0 pl-[3px] leading-[15.500px]">13°C<br /><span className="text-[#555]">Smoke</span></div>
      <svg viewBox="0 0 24 24" className="size-[24px] shrink-0"><path d="M0 0H11.400V11.400H0ZM12.600 0H24V11.400H12.600ZM0 12.600H11.400V24H0ZM12.600 12.600H24V24H12.600Z" fill="#0b78d0" /></svg>
      <div className="ml-[13px] flex h-[31px] w-[218px] shrink-0 items-center rounded-full border border-[#cfd6e4] bg-[#f3f7fd] pl-[9px] pr-[2px] text-[13px] text-[#5c5f66]">
        <Search className="mr-[9px] size-[17px] text-[#222]" strokeWidth={2} />Search
        <div className="ml-auto flex h-[26px] w-[51px] items-center justify-center rounded-full bg-[#e1e4eb]"><Briefcase className="h-[19px] w-[23px]" /></div>
      </div>
      <div className="ml-[2px] flex shrink-0">
        {apps.map(([Icon, cls, open], i) => (
          <div key={i} className="relative flex h-[48px] w-[44.100px] shrink-0 items-center justify-center"><Icon className={cls} />{open && <i className="absolute bottom-[4px] h-[3px] w-[6px] rounded-full bg-[#7b8089]" />}</div>
        ))}
        <div className="relative ml-[3px] mt-[5px] flex h-[39px] w-[37px] shrink-0 items-center justify-center rounded-[4px] border border-[#c9d0e0] bg-[#eef1fa]"><WebexApp className="size-[24px]" /><i className="absolute bottom-0 h-[3px] w-[16px] rounded-full bg-[#0a72d0]" /></div>
      </div>
      <ChevronUp className="ml-[26px] size-[14px] shrink-0" strokeWidth={2} />
      <div className="ml-[10px] flex h-[38px] w-[31px] shrink-0 items-center justify-center rounded-[4px] border border-[#e3e9f3] bg-[#f1f5fb]">
        <svg viewBox="0 0 16 18" className="h-[18px] w-[17px]" fill="none" stroke="#222"><rect x="5.500" y="1.500" width="5" height="9" rx="2.500" fill="#222" /><path d="M3 8.500C3 14.500 13 14.500 13 8.500M8 13V16.500" /><path d="M0 1.500L15 16.500" strokeWidth="1.200" /></svg>
      </div>
      <div className="ml-[6px] w-[34px] shrink-0 text-center leading-[16px]">ENG<br />IN</div>
      <Wifi className="ml-[12px] size-[17px] shrink-0" strokeWidth={2} />
      <Volume2 className="ml-[7px] size-[16px] shrink-0" strokeWidth={1.500} />
      <svg viewBox="0 0 16 10" className="ml-[8px] h-[10px] w-[16px] shrink-0"><rect x=".7" y=".7" width="13" height="8.600" rx="2" fill="none" stroke="#222" strokeWidth="1.200" /><rect x="2.200" y="2.200" width="10" height="5.600" fill="#111" /><path d="M15 3.500V6.500" stroke="#222" strokeWidth="1.500" /></svg>
      <div className="ml-auto w-[76px] shrink-0 text-right leading-[16px] tracking-[0.200px]">12:51<br />17-01-2024</div>
      <svg viewBox="0 0 14 16" className="ml-[8px] mr-[21px] h-[16px] w-[14px] shrink-0"><path d="M7 .8C3.800 .8 2.200 3 2.200 5.800V9L.5 12V12.800H13.500V12L11.800 9V5.800C11.800 3 10.200 .8 7 .8ZM5 13.600C5.400 15.500 8.600 15.500 9 13.600Z" fill="#0b4aa2" /></svg>
    </footer>
  );
}

export default function App() {
  return (
    <div className="flex h-[768px] w-[1366px] flex-col overflow-hidden whitespace-nowrap bg-[linear-gradient(#1c1c1c,#111_640px)] font-['Open_Sans',sans-serif]">
      <TopBar />
      <ControlStrip />
      <div className="flex h-[560px] pl-[145px]">
        <RemoteScreen />
        <div className="w-[140px]" />
        <Participants />
      </div>
      <CallControls />
      <WindowsTaskbar />
    </div>
  );
}
